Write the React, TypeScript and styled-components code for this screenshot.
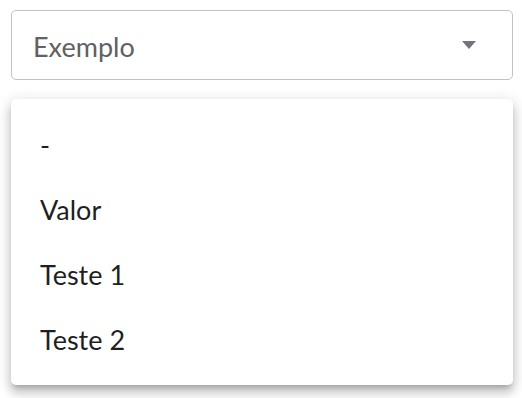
import React from "react";
import styled, { createGlobalStyle } from "styled-components";

const Global = createGlobalStyle`
  html, body { margin: 0; padding: 0; background: #ffffff; }
  body { font-family: "Lato", "Noto Sans", sans-serif; }
`;

const Page = styled.div`
  width: 522px;
  height: 398px;
  box-sizing: border-box;
  padding: 10px 9px 0 11px;
  display: flex;
  flex-direction: column;
  gap: 19px;
`;

const SelectBox = styled.div`
  height: 70px;
  box-sizing: border-box;
  border: 1.5px solid #c2c2c2;
  border-radius: 5px;
  display: flex;
  align-items: center;
  justify-content: space-between;
  padding: 0 36px 0 21px;
`;

const SelectValue = styled.span`
  font-size: 27px;
  color: #616161;
  line-height: 1;
  margin-top: 2px;
`;

const Arrow = styled.svg`
  width: 14px;
  height: 8px;
  display: block;
  margin-top: 0px;
`;

const Menu = styled.ul`
  list-style: none;
  margin: 0;
  padding: 13px 0;
  background: #ffffff;
  border-radius: 5px;
  box-shadow: 0 5px 5px -3px rgba(0, 0, 0, 0.2),
    0 8px 10px 1px rgba(0, 0, 0, 0.14), 0 3px 14px 2px rgba(0, 0, 0, 0.12);
`;

const Item = styled.li`
  height: 65px;
  display: flex;
  align-items: center;
  padding: 0 29px;
  font-size: 27px;
  color: #1f1f1f;
  line-height: 1;
`;

const options = ["-", "Valor", "Teste 1", "Teste 2"];

export default function App() {
  return (
    <>
      <Global />
      <Page>
        <SelectBox>
          <SelectValue>Exemplo</SelectValue>
          <Arrow viewBox="0 0 14 8">
            <polygon points="0,0 14,0 7,8" fill="#74747c" />
          </Arrow>
        </SelectBox>
        <Menu>
          {options.map((o) => (
            <Item key={o}>{o}</Item>
          ))}
        </Menu>
      </Page>
    </>
  );
}
